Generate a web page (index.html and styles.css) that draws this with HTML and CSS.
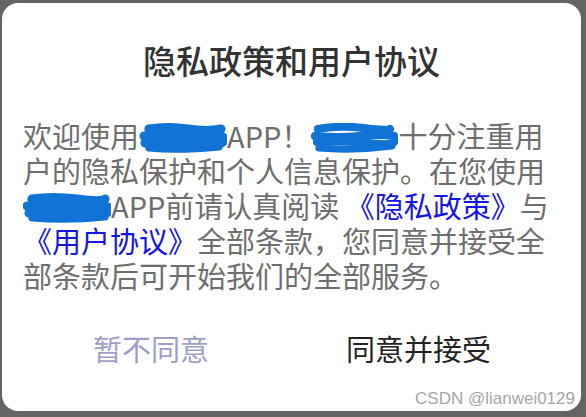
FILE: index.html
```html
<!DOCTYPE html>
<html lang="zh">
<head>
<meta charset="utf-8">
<link rel="stylesheet" href="styles.css">
</head>
<body>
<div class="screen">
  <div class="dialog">
    <h1 class="title">隐私政策和用户协议</h1>
    <p class="content">欢迎使用<span class="redact"><svg viewBox="0 0 90 30" preserveAspectRatio="none"><g fill="none" stroke="#1173d6" stroke-linecap="round" stroke-linejoin="round"><path d="M10 6 Q30 3 50 6 T84 6" stroke-width="9"/><path d="M5 13 Q25 11 45 14 T86 14" stroke-width="9"/><path d="M6 20 Q30 18 55 21 T86 19" stroke-width="9"/><path d="M10 25 Q40 28 82 24" stroke-width="7"/></g></svg></span>APP！<span class="redact"><svg viewBox="0 0 90 30" preserveAspectRatio="none"><g fill="none" stroke="#1173d6" stroke-linecap="round" stroke-linejoin="round"><path d="M8 6 Q30 2 55 5 T82 6" stroke-width="8"/><path d="M5 13 Q30 15 50 13 T86 13" stroke-width="8"/><path d="M7 19 Q35 17 60 20 T87 18" stroke-width="8"/><path d="M9 25 Q45 28 84 23" stroke-width="7"/></g></svg></span>十分注重用户的隐私保护和个人信息保护。在您使用<span class="redact"><svg viewBox="0 0 90 30" preserveAspectRatio="none"><g fill="none" stroke="#1173d6" stroke-linecap="round" stroke-linejoin="round"><path d="M9 6 Q30 3 55 6 T84 6" stroke-width="9"/><path d="M4 13 Q30 11 50 14 T87 14" stroke-width="9"/><path d="M6 20 Q30 18 55 21 T86 20" stroke-width="9"/><path d="M9 25 Q45 28 84 24" stroke-width="7"/></g></svg></span>APP前请认真阅读 <span class="link">《隐私政策》</span>与<span class="link">《用户协议》</span>全部条款，您同意并接受全部条款后可开始我们的全部服务。</p>
    <div class="actions">
      <span class="btn btn-cancel">暂不同意</span>
      <span class="btn btn-ok">同意并接受</span>
    </div>
  </div>
  <div class="watermark">CSDN @lianwei0129</div>
</div>
</body>
</html>
```

FILE: styles.css
```css
html, body {
  margin: 0;
  padding: 0;
}
body {
  background: #646464;
  width: 586px;
  height: 417px;
  overflow: hidden;
  font-family: "Noto Sans CJK SC", "Noto Sans", sans-serif;
}
.screen {
  position: relative;
  width: 586px;
  height: 417px;
  padding-top: 3px;
  padding-left: 2px;
  box-sizing: border-box;
}
.dialog {
  width: 579px;
  height: 408px;
  background: #fff;
  border-radius: 16px;
  box-sizing: border-box;
  padding: 37px 21px 0 21px;
}
.title {
  margin: 0;
  font-size: 33px;
  line-height: 40px;
  font-weight: 500;
  color: #333;
  text-align: center;
}
.content {
  margin: 38px 0 0 0;
  font-size: 29px;
  line-height: 35px;
  color: #6e6e6e;
}
.redact {
  display: inline-block;
  width: 88px;
  height: 30px;
  vertical-align: -5px;
}
.redact svg {
  display: block;
  width: 100%;
  height: 100%;
}
.link {
  color: #1414e6;
}
.actions {
  display: flex;
  gap: 137px;
  margin-top: 38px;
  padding-left: 70px;
  font-size: 29px;
  line-height: 35px;
}
.btn-cancel {
  color: #9e9ec6;
}
.btn-ok {
  color: #222;
}
.watermark {
  position: absolute;
  right: 11px;
  bottom: 8px;
  font-family: "Liberation Sans", Arial, sans-serif;
  font-size: 17px;
  line-height: 20px;
  color: #a6a6a6;
}
```
